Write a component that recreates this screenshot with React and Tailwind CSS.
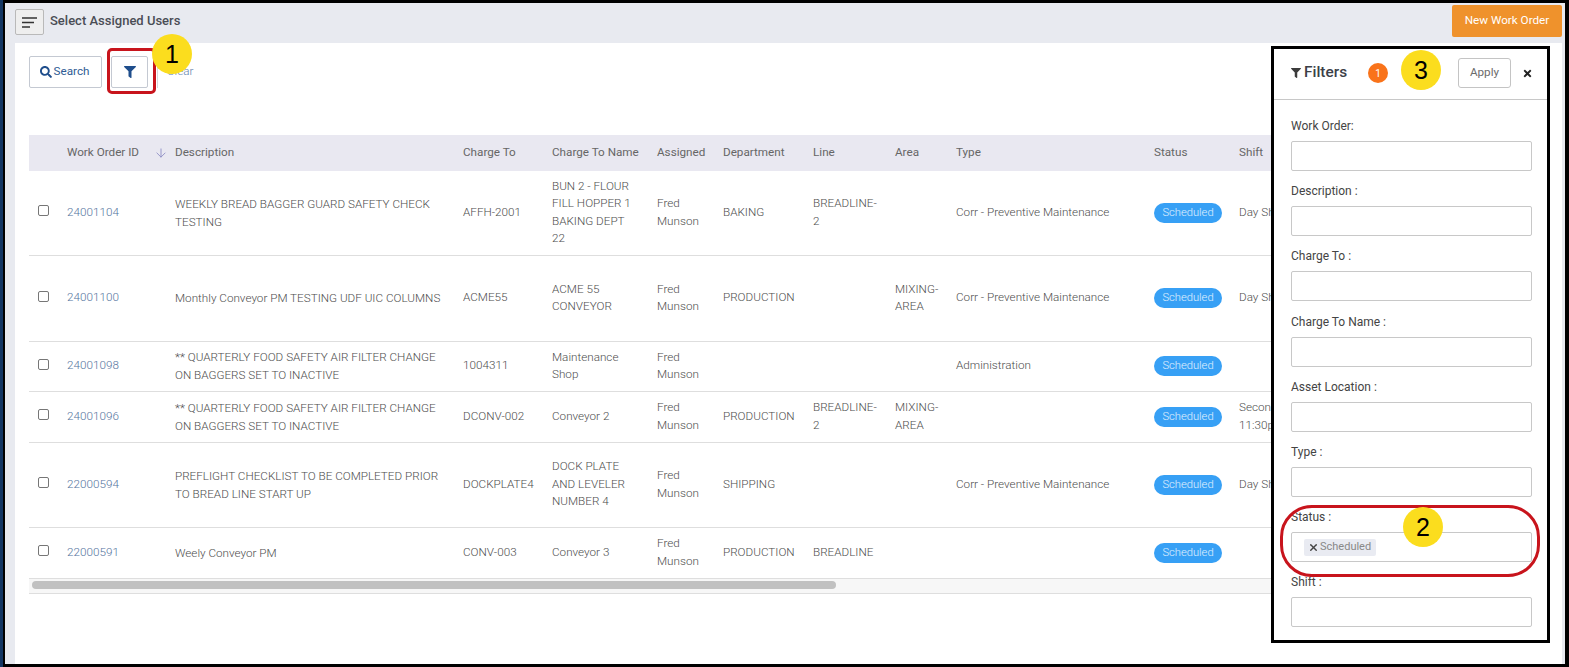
import { ArrowDown, X } from 'lucide-react';
import { FaFilter, FaSearch, FaTimes } from 'react-icons/fa';

const COLUMNS = [
  { label: '', width: 'w-[28px]' },
  { label: 'Work Order ID', width: 'w-[108px]' },
  { label: 'Description', width: 'w-[288px]' },
  { label: 'Charge To', width: 'w-[89px]' },
  { label: 'Charge To Name', width: 'w-[105px]' },
  { label: 'Assigned', width: 'w-[66px]' },
  { label: 'Department', width: 'w-[90px]' },
  { label: 'Line', width: 'w-[82px]' },
  { label: 'Area', width: 'w-[61px]' },
  { label: 'Type', width: 'w-[198px]' },
  { label: 'Status', width: 'w-[85px]' },
  { label: 'Shift', width: 'w-[110px]' },
];

const ROWS = [
  { id: '24001104', height: 'h-[84px]', desc: 'WEEKLY BREAD BAGGER GUARD SAFETY CHECK TESTING', chargeTo: 'AFFH-2001', name: 'BUN 2 - FLOUR FILL HOPPER 1 BAKING DEPT 22', dept: 'BAKING', line: 'BREADLINE-2', area: '', type: 'Corr - Preventive Maintenance', shift: 'Day Shift' },
  { id: '24001100', height: 'h-[86px]', desc: 'Monthly Conveyor PM TESTING UDF UIC COLUMNS', chargeTo: 'ACME55', name: 'ACME 55 CONVEYOR', dept: 'PRODUCTION', line: '', area: 'MIXING-AREA', type: 'Corr - Preventive Maintenance', shift: 'Day Shift' },
  { id: '24001098', height: 'h-[50px]', desc: '** QUARTERLY FOOD SAFETY AIR FILTER CHANGE ON BAGGERS SET TO INACTIVE', chargeTo: '1004311', name: 'Maintenance Shop', dept: '', line: '', area: '', type: 'Administration', shift: '' },
  { id: '24001096', height: 'h-[51px]', desc: '** QUARTERLY FOOD SAFETY AIR FILTER CHANGE ON BAGGERS SET TO INACTIVE', chargeTo: 'DCONV-002', name: 'Conveyor 2', dept: 'PRODUCTION', line: 'BREADLINE-2', area: 'MIXING-AREA', type: '', shift: 'Second Shift 11:30pm' },
  { id: '22000594', height: 'h-[85px]', desc: 'PREFLIGHT CHECKLIST TO BE COMPLETED PRIOR TO BREAD LINE START UP', chargeTo: 'DOCKPLATE4', name: 'DOCK PLATE AND LEVELER NUMBER 4', dept: 'SHIPPING', line: '', area: '', type: 'Corr - Preventive Maintenance', shift: 'Day Shift' },
  { id: '22000591', height: 'h-[51px]', desc: 'Weely Conveyor PM', chargeTo: 'CONV-003', name: 'Conveyor 3', dept: 'PRODUCTION', line: 'BREADLINE', area: '', type: '', shift: '' },
];

const FILTER_FIELDS = ['Work Order:', 'Description :', 'Charge To :', 'Charge To Name :', 'Asset Location :', 'Type :', 'Status :', 'Shift :'];

const Marker = ({ n, className }) => (
  <div className={`absolute w-10 h-10 rounded-full bg-[#fbdd1e] flex items-center justify-center text-[25px] leading-none text-black font-['Liberation_Sans',sans-serif] ${className}`}>
    {n}
  </div>
);

const Cell = ({ children }) => (
  <td className="pl-[10px] pr-[6px] align-middle">{children}</td>
);

const FilterPanel = () => (
  <div className="absolute left-[1268px] top-[46px] w-[279px] h-[597px] bg-white border-[3px] border-black flex flex-col">
    <div className="h-[51px] shrink-0 border-b border-[#c8c8c8] flex items-center pl-[17px] pr-[14px] pb-[2px]">
      <FaFilter className="w-[10px] h-[10px] text-[#3c3c3c]" />
      <span className="ml-[3px] text-[15.4px] font-medium text-[#3c4048]">Filters</span>
      <span className="ml-[21px] w-5 h-5 rounded-full bg-[#f9731a] text-white text-[10px] flex items-center justify-center">1</span>
      <button className="ml-auto w-[53px] h-[30px] bg-white border border-[#c4c4c4] rounded-[3px] text-[11.7px] text-[#6b6b6b]">Apply</button>
      <FaTimes className="ml-[11px] w-[11px] h-[11px] text-[#222]" />
    </div>
    <div className="pt-[18px] pl-[17px] pr-[15px] flex flex-col">
      {FILTER_FIELDS.map(f => (
        <div key={f} className="h-[65.2px] shrink-0">
          <div className="h-[23px] text-[12px] leading-[16px] text-[#444]">{f}</div>
          <div className="h-[30px] border border-[#c8c8c8] rounded-[2px] flex items-center pl-[12px]">
            {f === 'Status :' && (
              <span className="h-[17px] pl-[4px] pr-[5px] rounded-[2px] bg-[#e9ebf2] text-[11px] text-[#888] flex items-center gap-[1px]">
                <X className="w-[11px] h-[11px] text-[#444]" strokeWidth={3} />
                Scheduled
              </span>
            )}
          </div>
        </div>
      ))}
    </div>
  </div>
);

export default function App() {
  return (
    <div className="relative h-[667px] w-[1569px] overflow-hidden bg-black pt-[3px] pl-[2px] pr-[4px] pb-[3px] border-l-[3px] border-[#133663] font-['Roboto',sans-serif]">
      <div className="h-full bg-[#e8eaf0] flex flex-col">
        <div className="h-[40px] shrink-0 flex items-center pl-[10px] pr-[3px]">
          <button className="w-[29px] h-[26px] mb-[2px] bg-[#eeeeee] border border-[#b9b9b9] rounded-[2px] flex items-center justify-center">
            <svg width="15" height="11" viewBox="0 0 15 11" fill="none" stroke="#333" strokeWidth="1.6">
              <path d="M0 1h15M0 5.5h12M0 10h8" />
            </svg>
          </button>
          <span className="ml-[6px] mb-[5px] text-[13px] font-medium text-[#4a4d55]">Select Assigned Users</span>
          <button className="ml-auto w-[110px] h-[32px] bg-[#ef922c] rounded-[2px] text-white text-[11.7px] mb-[4px]">New Work Order</button>
        </div>

        <div className="flex-1 ml-[10px] mr-[3px] bg-white pl-[14px] pt-[13px] overflow-hidden">
          <div className="flex items-center h-[32px]">
            <button className="w-[73px] h-[32px] pr-[2px] border border-[#c4c9d2] rounded-[2px] flex items-center justify-center gap-[2px] text-[11.7px] text-[#2f5c94]">
              <FaSearch className="w-[12px] h-[12px] text-[#1f4e8c]" />
              Search
            </button>
            <button className="ml-[9px] w-[37px] h-[32px] border border-[#c4c9d2] rounded-[2px] flex items-center justify-center">
              <FaFilter className="w-[12px] h-[12px] text-[#1f4e8c]" />
            </button>
            <span className="ml-[9px] w-px h-[32px] bg-[#d5d8de]" />
            <span className="ml-[9px] text-[11.7px] font-light text-[#5f83ad]">Clear</span>
          </div>

          <div className="mt-[47px] w-[1300px]">
            <table className="table-fixed border-collapse w-[1309px] text-[11.7px] leading-[17.5px] font-light text-[#4d4d4d]">
              <thead>
                <tr className="h-[36px] bg-[#e9e8f1]">
                  {COLUMNS.map(c => (
                    <th key={c.label} className={`${c.width} pl-[10px] pr-0 text-left font-normal text-[#666] relative`}>
                      {c.label}
                      {c.label === 'Work Order ID' && (
                        <ArrowDown className="absolute -right-[3px] top-[11px] w-[14px] h-[14px] text-[#8d8cc4]" strokeWidth={1.5} />
                      )}
                    </th>
                  ))}
                </tr>
              </thead>
              <tbody>
                {ROWS.map(r => (
                  <tr key={r.id} className={`${r.height} border-b border-[#dedede]`}>
                    <td className="pl-[9px] align-middle">
                      <input type="checkbox" className="block w-[11px] h-[11px] mb-[4px] appearance-none border border-[#767676] rounded-[2px] bg-white" />
                    </td>
                    <Cell><span className="text-[#54749e]">{r.id}</span></Cell>
                    <Cell><div className="leading-[18px]">{r.desc}</div></Cell>
                    <Cell>{r.chargeTo}</Cell>
                    <Cell><div className="w-[85px]">{r.name}</div></Cell>
                    <Cell>Fred Munson</Cell>
                    <Cell>{r.dept}</Cell>
                    <Cell>{r.line}</Cell>
                    <Cell>{r.area}</Cell>
                    <Cell>{r.type}</Cell>
                    <Cell>
                      <span className="block w-[68px] h-[20px] rounded-full bg-[#37a0f5] text-white/85 text-[11.2px] leading-[19px] text-center">Scheduled</span>
                    </Cell>
                    <Cell>{r.shift}</Cell>
                  </tr>
                ))}
              </tbody>
            </table>
            <div className="h-[15px] bg-[#f7f7f7] border-b border-[#dedede] flex items-center pl-[3px]">
              <div className="w-[804px] h-[8px] mb-[2px] rounded-full bg-[#c1c1c1]" />
            </div>
          </div>
        </div>
      </div>

      <FilterPanel />

      <div className="absolute left-[104px] top-[48px] w-[49px] h-[46px] border-[3px] border-[#c8141c] rounded-[5px]" />
      <div className="absolute left-[1277px] top-[505px] w-[260px] h-[72px] border-[3px] border-[#c8141c] rounded-[32px]" />
      <Marker n="1" className="left-[149px] top-[34px]" />
      <Marker n="3" className="left-[1398px] top-[50px]" />
      <Marker n="2" className="left-[1400px] top-[507px]" />
    </div>
  );
}
